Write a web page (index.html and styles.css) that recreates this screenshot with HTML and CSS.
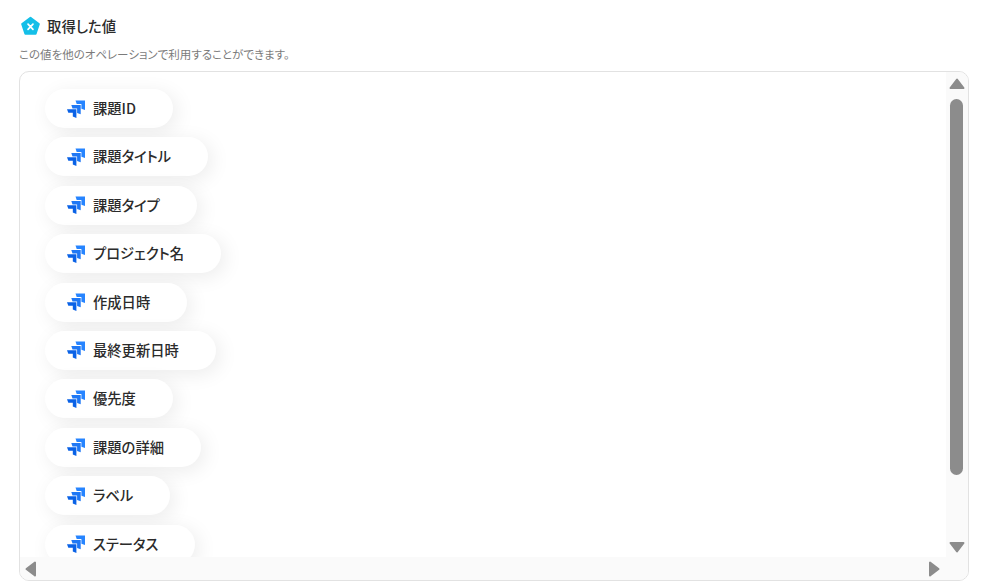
FILE: index.html
```html
<!DOCTYPE html>
<html lang="ja">
<head>
  <meta charset="UTF-8">
  <title>取得した値</title>
  <link rel="stylesheet" href="styles.css">
</head>
<body>
  <svg width="0" height="0" class="defs">
    <defs>
      <symbol id="jira" viewBox="0 0 18 18">
        <path fill="#2684ff" d="M8.500 .5H18V10l-3.600-1.200V4.100H9.700z"/>
        <path fill="#1f78f5" d="M4.300 4.900h9.400v9.400l-3.600-1.200V8.500H5.500z"/>
        <path fill="#0a62e6" d="M0 9.200h9.400v8.800l-3.600-1.400v-3.800H1.300z"/>
      </symbol>
    </defs>
  </svg>

  <div class="page">
    <h2 class="title">
      <svg class="title-icon" viewBox="0 0 20 20">
        <path fill="#14bfe8" d="M10.600.6l8.800 6.500a1 1 0 0 1 .4 1.100l-3.400 10.300a1 1 0 0 1-1 .7H4.600a1 1 0 0 1-1-.7L.2 8.200a1 1 0 0 1 .4-1.100L9.400.6a1 1 0 0 1 1.200 0z"/>
        <path stroke="#fff" stroke-width="1.800" stroke-linecap="round" d="M7.400 8.100l5.200 5.400M12.600 8.100l-5.200 5.400"/>
      </svg>
      取得した値
    </h2>
    <p class="desc">この値を他のオペレーションで利用することができます。</p>

    <div class="box">
      <ul class="list">
        <li class="pill"><svg class="jira"><use href="#jira"/></svg>課題ID</li>
        <li class="pill"><svg class="jira"><use href="#jira"/></svg>課題タイトル</li>
        <li class="pill"><svg class="jira"><use href="#jira"/></svg>課題タイプ</li>
        <li class="pill"><svg class="jira"><use href="#jira"/></svg>プロジェクト名</li>
        <li class="pill"><svg class="jira"><use href="#jira"/></svg>作成日時</li>
        <li class="pill"><svg class="jira"><use href="#jira"/></svg>最終更新日時</li>
        <li class="pill"><svg class="jira"><use href="#jira"/></svg>優先度</li>
        <li class="pill"><svg class="jira"><use href="#jira"/></svg>課題の詳細</li>
        <li class="pill"><svg class="jira"><use href="#jira"/></svg>ラベル</li>
        <li class="pill"><svg class="jira"><use href="#jira"/></svg>ステータス</li>
      </ul>

      <div class="vbar">
        <svg class="arrow-v" viewBox="0 0 16 12"><path d="M8 1.500l6.500 8.500H1.500z"/></svg>
        <div class="thumb"></div>
        <svg class="arrow-v arrow-end" viewBox="0 0 16 12"><path d="M8 10.500l6.500-8.500H1.500z"/></svg>
      </div>
      <div class="hbar">
        <svg class="arrow-h" viewBox="0 0 12 16"><path d="M1.500 8l8.500-6.500v13z"/></svg>
        <svg class="arrow-h" viewBox="0 0 12 16"><path d="M10.500 8L2 1.500v13z"/></svg>
      </div>
      <div class="corner"></div>
    </div>
  </div>
</body>
</html>
```

FILE: styles.css
```css
* {
  margin: 0;
  padding: 0;
  box-sizing: border-box;
}

html,
body {
  height: 100%;
  overflow: hidden;
}

body {
  font-family: "Noto Sans CJK JP", "Noto Sans", sans-serif;
  font-feature-settings: "palt";
  background: white;
  color: #2b2b2b;
}

.defs {
  position: absolute;
}

.page {
  padding: 16px 28px 0 19px;
}

.title {
  display: flex;
  align-items: center;
  gap: 7px;
  height: 20px;
  margin-left: 2px;
  font-size: 14.400px;
  font-weight: 500;
  line-height: 20px;
}

.title-icon {
  width: 19px;
  height: 20px;
}

.desc {
  margin-top: 10px;
  font-size: 11.500px;
  line-height: 16px;
  color: #7b7b7b;
}

.box {
  display: grid;
  grid-template-columns: 1fr 22px;
  grid-template-rows: 1fr 23px;
  height: 510px;
  margin-top: 9px;
  border: 1px solid #e2e2e2;
  border-radius: 10px;
  overflow: hidden;
}

.list {
  list-style: none;
  padding: 17px 0 0 25px;
  overflow: hidden;
}

.pill {
  display: flex;
  align-items: center;
  width: fit-content;
  height: 39px;
  margin-bottom: 9.400px;
  padding: 0 37px 2px 22px;
  border-radius: 20px;
  background: white;
  box-shadow: 4px 4px 20px rgba(0, 0, 0, 0.08);
  font-size: 14.300px;
  font-weight: 500;
  white-space: nowrap;
}

.jira {
  width: 18px;
  height: 18px;
  margin: 2px 8px 0 0;
  flex-shrink: 0;
}

.vbar {
  display: flex;
  flex-direction: column;
  align-items: center;
  padding: 6px 1px 4px 0;
  background: #fafafa;
}

.thumb {
  width: 13px;
  height: 376px;
  margin-top: 9px;
  border-radius: 7px;
  background: #8c8c8c;
}

.hbar {
  display: flex;
  justify-content: space-between;
  align-items: center;
  padding: 0 6px 0 5px;
  background: #fafafa;
}

.corner {
  background: #fafafa;
}

.arrow-v {
  width: 16px;
  height: 12px;
}

.arrow-end {
  margin-top: auto;
}

.arrow-h {
  width: 12px;
  height: 16px;
}

.arrow-v path,
.arrow-h path {
  fill: #8c8c8c;
  stroke: #8c8c8c;
  stroke-width: 2;
  stroke-linejoin: round;
}
```
